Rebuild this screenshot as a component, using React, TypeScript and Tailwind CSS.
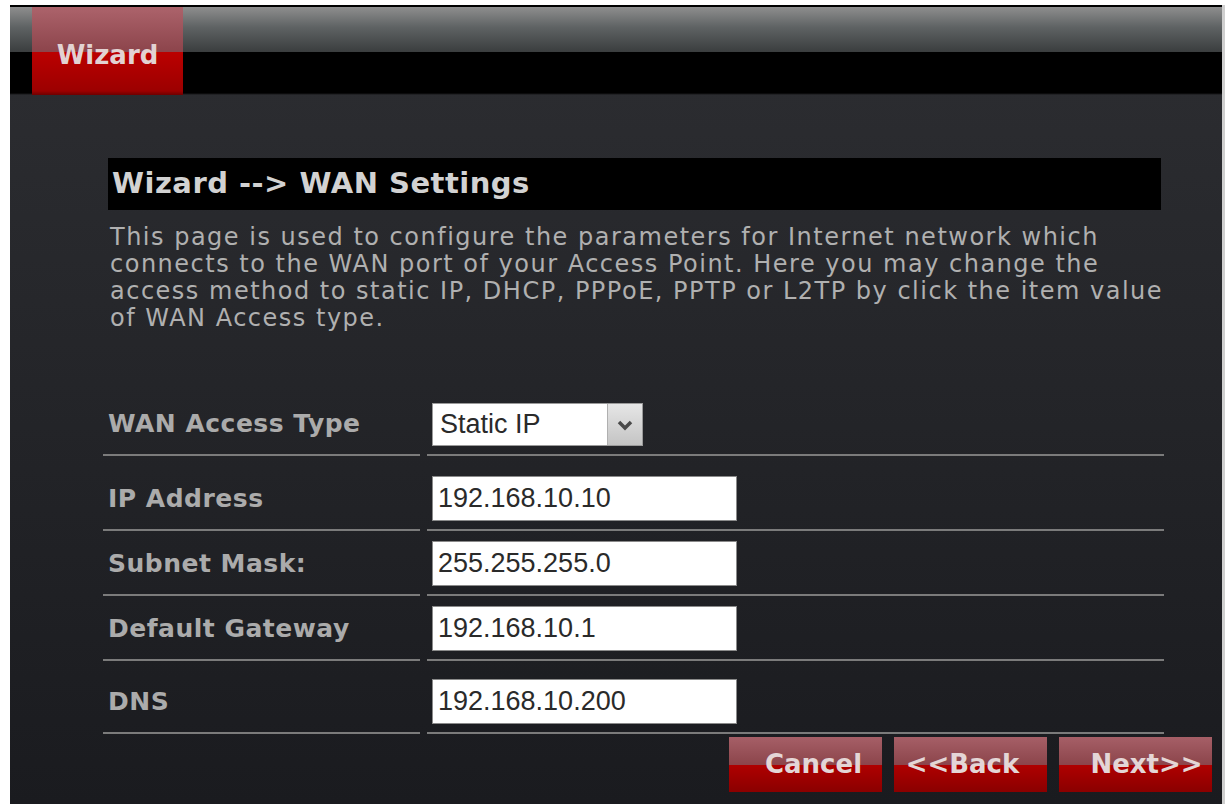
import React from 'react';

const fields = [
  { label: 'IP Address', value: '192.168.10.10', height: 'h-[75px]' },
  { label: 'Subnet Mask:', value: '255.255.255.0', height: 'h-[65px]' },
  { label: 'Default Gateway', value: '192.168.10.1', height: 'h-[65px]' },
  { label: 'DNS', value: '192.168.10.200', height: 'h-[73px]' },
];

const FormRow: React.FC<{ label: string; height: string; children: React.ReactNode }> = ({ label, height, children }) => (
  <>
    <div className={`${height} flex items-end pb-[8px] pl-[5px] border-b-2 border-[#7b7b7b]`}>
      <span className="h-[45px] flex items-center font-bold text-[25px] tracking-[0.5px] text-[#ababab] whitespace-nowrap">{label}</span>
    </div>
    <div className={`${height} flex items-end pb-[8px] pl-[5px] border-b-2 border-[#7b7b7b]`}>{children}</div>
  </>
);

const WizardButton: React.FC<{ className: string; children: React.ReactNode }> = ({ className, children }) => (
  <button
    type="button"
    className={`w-[153px] h-[55px] flex items-center justify-center font-bold text-[26px] text-[#e4d6d6] bg-[linear-gradient(to_bottom,#a65f67_0%,#8c454b_50%,#b00000_50%,#8a0000_100%)] ${className}`}>
    {children}
  </button>
);

export default function App() {
  return (
    <div className="w-[1229px] h-[804px] overflow-hidden bg-white pt-[5px] pl-[10px] font-['DejaVu_Sans',Verdana,sans-serif]">
      <div className="flex h-full">
        <div className="w-[1212px] h-full border-t-2 border-black bg-[linear-gradient(to_bottom,#2d2e32,#1a1b1f)]">
          {/* header bar with the active tab */}
          <div className="h-[88px] pl-[22px] bg-[linear-gradient(to_bottom,#8e8e8e_0px,#5f6364_20px,#3a3d3e_45px,#000_45px,#000_86px,#2c2d31_88px)]">
            <div className="w-[151px] h-[88px] pt-[9px] flex items-center justify-center font-bold text-[26px] text-[#e2d2d2] bg-[linear-gradient(to_bottom,#ac636b_0px,#8c444b_45px,#bb0000_45px,#9c0000_84px,#6e0000_88px)]">
              Wizard
            </div>
          </div>

          <div className="ml-[93px] w-[1061px]">
            <div className="mt-[63px] ml-[5px] mr-[3px] h-[52px] bg-black flex items-center pl-[4px] font-bold text-[29px] tracking-[0.5px] text-[#d2d2d2] whitespace-nowrap">
              Wizard --&gt; WAN Settings
            </div>

            <p className="mt-[14px] pl-[7px] text-[24px] leading-[27px] tracking-[1.5px] text-[#b0b0b0] whitespace-nowrap">
              This page is used to configure the parameters for Internet network which
              <br />
              connects to the WAN port of your Access Point. Here you may change the
              <br />
              access method to static IP, DHCP, PPPoE, PPTP or L2TP by click the item value
              <br />
              of WAN Access type.
            </p>

            <div className="mt-[54px] grid grid-cols-[317px_737px] gap-x-[7px]">
              <FormRow label="WAN Access Type" height="h-[70px]">
                <div className="w-[211px] h-[43px] bg-white border border-[#9a9a9a] flex items-center font-['Liberation_Sans',Arial,sans-serif] text-[27px] text-[#2a2a2a]">
                  <span className="flex-1 pl-[7px]">Static IP</span>
                  <span className="w-[35px] h-full bg-[linear-gradient(to_bottom,#e6e6e6,#c4c4c4)] border-l border-[#b0b0b0] flex items-center justify-center">
                    <svg width="18" height="14" viewBox="0 0 18 14">
                      <polyline points="3,4 9,10 15,4" fill="none" stroke="#4a4a4a" strokeWidth="3.5" />
                    </svg>
                  </span>
                </div>
              </FormRow>
              {fields.map((f) => (
                <FormRow key={f.label} label={f.label} height={f.height}>
                  <input
                    readOnly
                    defaultValue={f.value}
                    className="w-[305px] h-[45px] bg-white border border-[#8a8a8a] pl-[5px] outline-none font-['Liberation_Sans',Arial,sans-serif] text-[27px] text-[#2a2a2a]"
                  />
                </FormRow>
              ))}
            </div>
          </div>

          <div className="mt-[3px] flex justify-end gap-[12px] pr-[10px]">
            <WizardButton className="pl-[16px]">Cancel</WizardButton>
            <WizardButton className="pr-[16px]">&lt;&lt;Back</WizardButton>
            <WizardButton className="pl-[22px]">Next&gt;&gt;</WizardButton>
          </div>
        </div>
        <div className="w-[3px] h-full bg-[#cfcfcf]" />
      </div>
    </div>
  );
}
